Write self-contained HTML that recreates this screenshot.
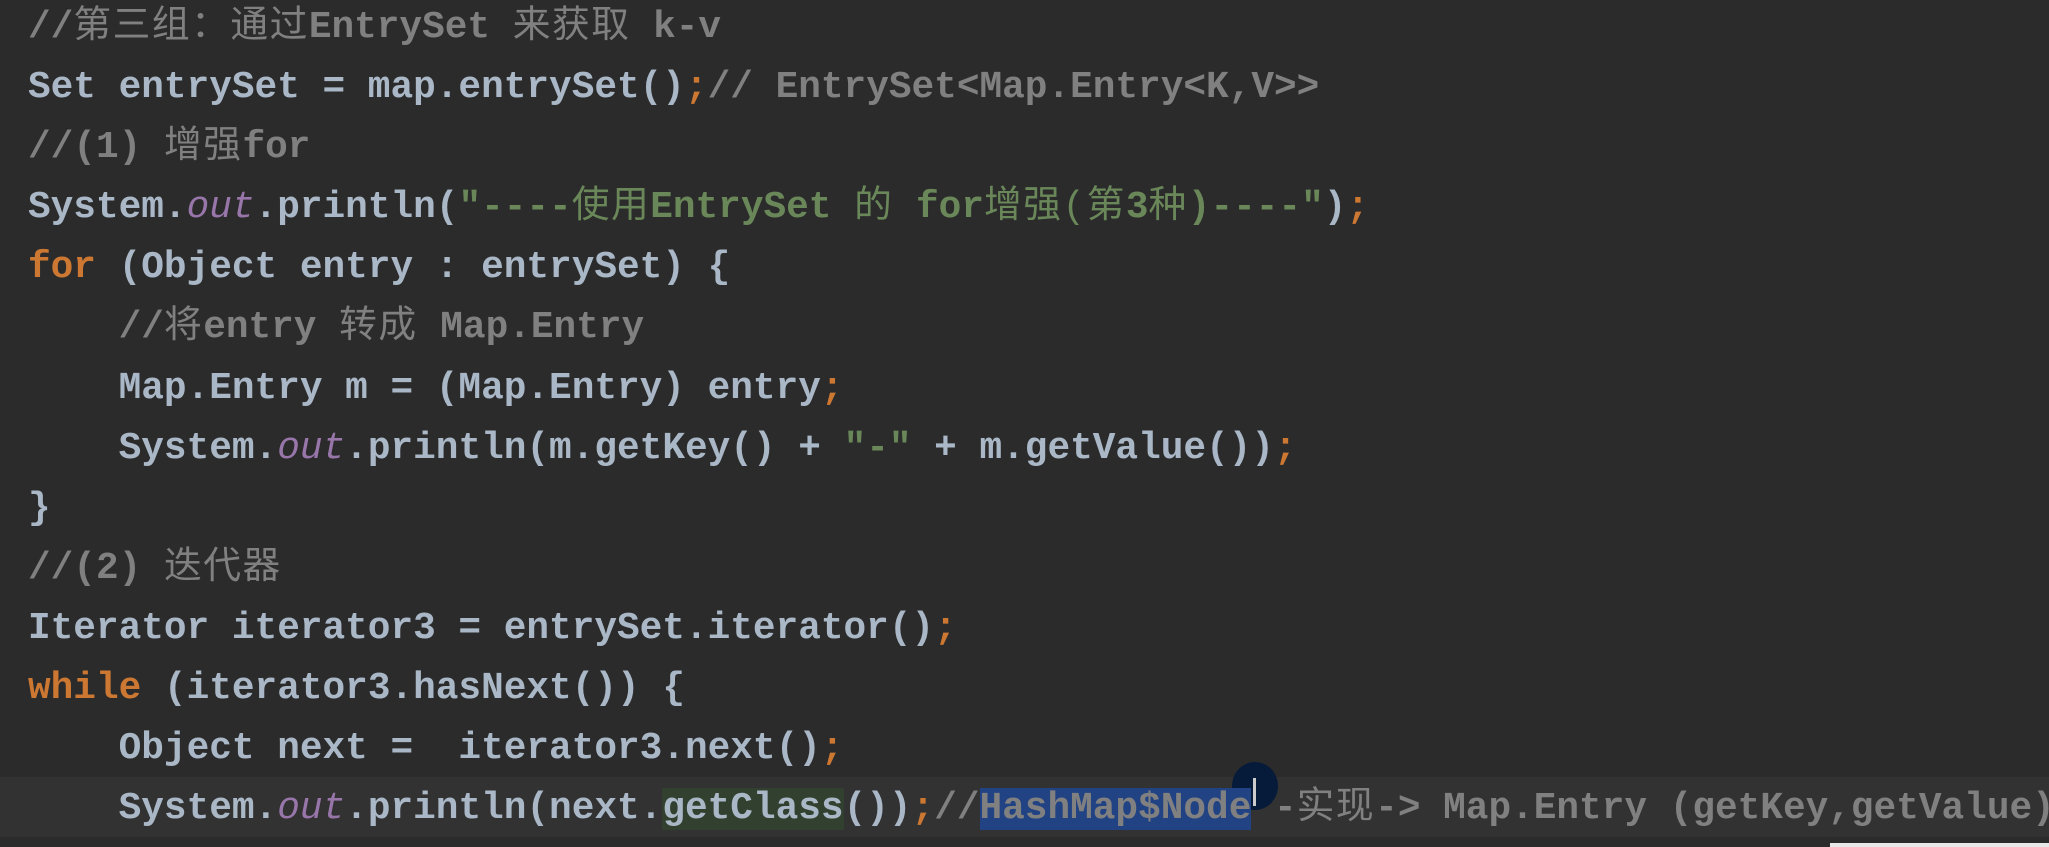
<!DOCTYPE html>
<html><head><meta charset="utf-8"><style>
html,body{margin:0;padding:0;background:#2b2b2b;width:2049px;height:847px;overflow:hidden;}
.code{position:absolute;left:28px;top:-2px;margin:0;font-family:"Liberation Mono","Noto Sans CJK SC",monospace;font-weight:bold;font-size:37.75px;line-height:60.1px;color:#a9b7c6;white-space:pre;}
.cm{color:#808080}.kw{color:#cc7832}.st{color:#6a8759}.f{color:#9876aa;font-style:italic;font-weight:normal}.sc{color:#cc7832}
.z{letter-spacing:1.5px;font-weight:normal}
.sel{background:#214283}
.gc{background:#32402f}
.hl{position:absolute;left:0;top:777px;width:2049px;height:60px;background:#323232}
</style></head><body>
<div class="hl"></div>
<div style="position:absolute;left:1232px;top:762px;width:46px;height:48px;border-radius:50%;background:#061a3a"></div>
<div style="position:absolute;left:1253px;top:778px;width:3px;height:28px;background:#ccc"></div>
<div style="position:absolute;left:1830px;top:843px;width:219px;height:4px;background:#e8e8e8"></div>
<pre class="code"><span class="cm">//<span class="z">第三组：通过</span>EntrySet <span class="z">来获取</span> k-v</span>
Set entrySet = map.entrySet()<span class="sc">;</span><span class="cm">// EntrySet&lt;Map.Entry&lt;K,V&gt;&gt;</span>
<span class="cm">//(1) <span class="z">增强</span>for</span>
System.<span class="f">out</span>.println(<span class="st">"----<span class="z">使用</span>EntrySet <span class="z">的</span> for<span class="z">增强(第</span>3<span class="z">种</span>)----"</span>)<span class="sc">;</span>
<span class="kw">for</span> (Object entry : entrySet) {
    <span class="cm">//<span class="z">将</span>entry <span class="z">转成</span> Map.Entry</span>
    Map.Entry m = (Map.Entry) entry<span class="sc">;</span>
    System.<span class="f">out</span>.println(m.getKey() + <span class="st">"-"</span> + m.getValue())<span class="sc">;</span>
}
<span class="cm">//(2) <span class="z">迭代器</span></span>
Iterator iterator3 = entrySet.iterator()<span class="sc">;</span>
<span class="kw">while</span> (iterator3.hasNext()) {
    Object next =  iterator3.next()<span class="sc">;</span>
    System.<span class="f">out</span>.println(next.<span class="gc">getClass</span>())<span class="sc">;</span><span class="cm">//<span class="sel">HashMap$Node</span> -<span class="z">实现</span>-&gt; Map.Entry (getKey,getValue)</span></pre>
</body></html>
